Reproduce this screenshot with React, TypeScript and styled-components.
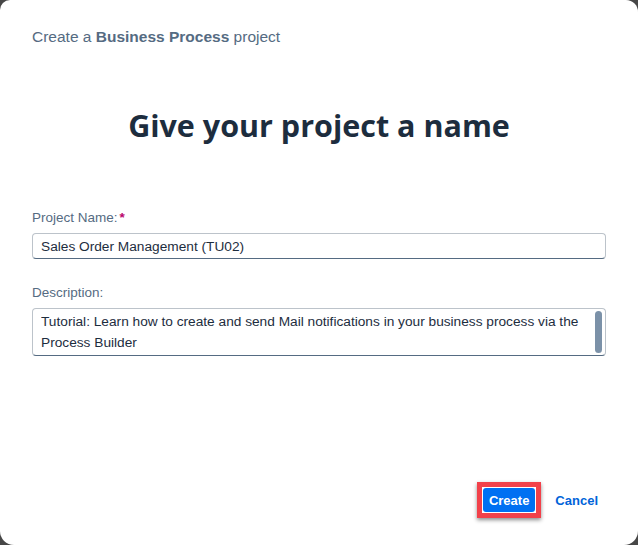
import * as React from "react";
import styled, { createGlobalStyle } from "styled-components";

const GlobalStyle = createGlobalStyle`
  html, body {
    margin: 0;
    padding: 0;
    background: #474747;
  }
  * {
    box-sizing: border-box;
  }
`;

const Dialog = styled.div`
  width: 638px;
  height: 545px;
  background: #ffffff;
  border-radius: 10px 12px 14px 14px;
  display: flex;
  flex-direction: column;
  padding: 0 32px;
  font-family: "Liberation Sans", Arial, sans-serif;
  color: #1d2d3e;
`;

const Header = styled.div`
  height: 74px;
  display: flex;
  align-items: center;
  font-size: 15.5px;
  color: #556b82;

  b {
    font-weight: 700;
  }
`;

const Title = styled.h1`
  margin: 30px 0 0;
  height: 42px;
  line-height: 42px;
  text-align: center;
  font-family: "Open Sans", "Liberation Sans", sans-serif;
  font-size: 30.5px;
  font-weight: 700;
  color: #1d2d3e;
`;

const Form = styled.div`
  margin-top: 63px;
  display: flex;
  flex-direction: column;
`;

const Field = styled.div<{ $gap?: number }>`
  display: flex;
  flex-direction: column;
  margin-top: ${(p) => p.$gap ?? 0}px;
`;

const Label = styled.label`
  font-size: 13.5px;
  line-height: 18px;
  color: #556b82;
  margin-bottom: 6px;
`;

const Required = styled.span`
  color: #ba066c;
  font-weight: 700;
  margin-left: 2px;
`;

const Input = styled.div`
  height: 26px;
  border: 1px solid #bcc3ca;
  border-bottom-color: #556b82;
  border-radius: 4px;
  padding: 0 8px;
  display: flex;
  align-items: center;
  font-size: 13.7px;
  color: #1d2d3e;
`;

const TextArea = styled.div`
  height: 48px;
  border: 1px solid #bcc3ca;
  border-bottom-color: #556b82;
  border-radius: 4px;
  padding: 2px 3px 2px 8px;
  display: flex;
  gap: 4px;
  font-size: 13.7px;
  line-height: 21px;
  color: #1d2d3e;
`;

const AreaText = styled.div`
  flex: 1;
  overflow: hidden;
`;

const Thumb = styled.div`
  width: 7px;
  height: 42px;
  border-radius: 4px;
  background: #7b91a8;
  flex-shrink: 0;
`;

const Footer = styled.div`
  margin-top: auto;
  height: 92px;
  display: flex;
  justify-content: flex-end;
  align-items: flex-start;
  padding-top: 29px;
  gap: 14px;
`;

const Highlight = styled.div`
  border: 5px solid #f2414a;
  padding: 1px;
  box-shadow: 0 2px 4px rgba(0, 0, 0, 0.45);
`;

const PrimaryButton = styled.button`
  display: block;
  height: 24px;
  padding: 0 6px;
  border: none;
  border-radius: 3px;
  background: #0070f2;
  color: #ffffff;
  font-family: "Liberation Sans", Arial, sans-serif;
  font-size: 13px;
  font-weight: 700;
  cursor: pointer;
`;

const LinkButton = styled.button`
  height: 36px;
  padding: 0 8px 0 0;
  border: none;
  background: none;
  color: #0064d9;
  font-family: "Liberation Sans", Arial, sans-serif;
  font-size: 13px;
  font-weight: 700;
  cursor: pointer;
`;

export default function App() {
  return (
    <>
      <GlobalStyle />
      <Dialog>
        <Header>
          <span>
            Create a <b>Business Process</b> project
          </span>
        </Header>
        <Title>Give your project a name</Title>
        <Form>
          <Field>
            <Label>
              Project Name:<Required>*</Required>
            </Label>
            <Input>Sales Order Management (TU02)</Input>
          </Field>
          <Field $gap={25}>
            <Label>Description:</Label>
            <TextArea>
              <AreaText>
                Tutorial: Learn how to create and send Mail notifications in your
                business process via the Process Builder
              </AreaText>
              <Thumb />
            </TextArea>
          </Field>
        </Form>
        <Footer>
          <Highlight>
            <PrimaryButton>Create</PrimaryButton>
          </Highlight>
          <LinkButton>Cancel</LinkButton>
        </Footer>
      </Dialog>
    </>
  );
}
